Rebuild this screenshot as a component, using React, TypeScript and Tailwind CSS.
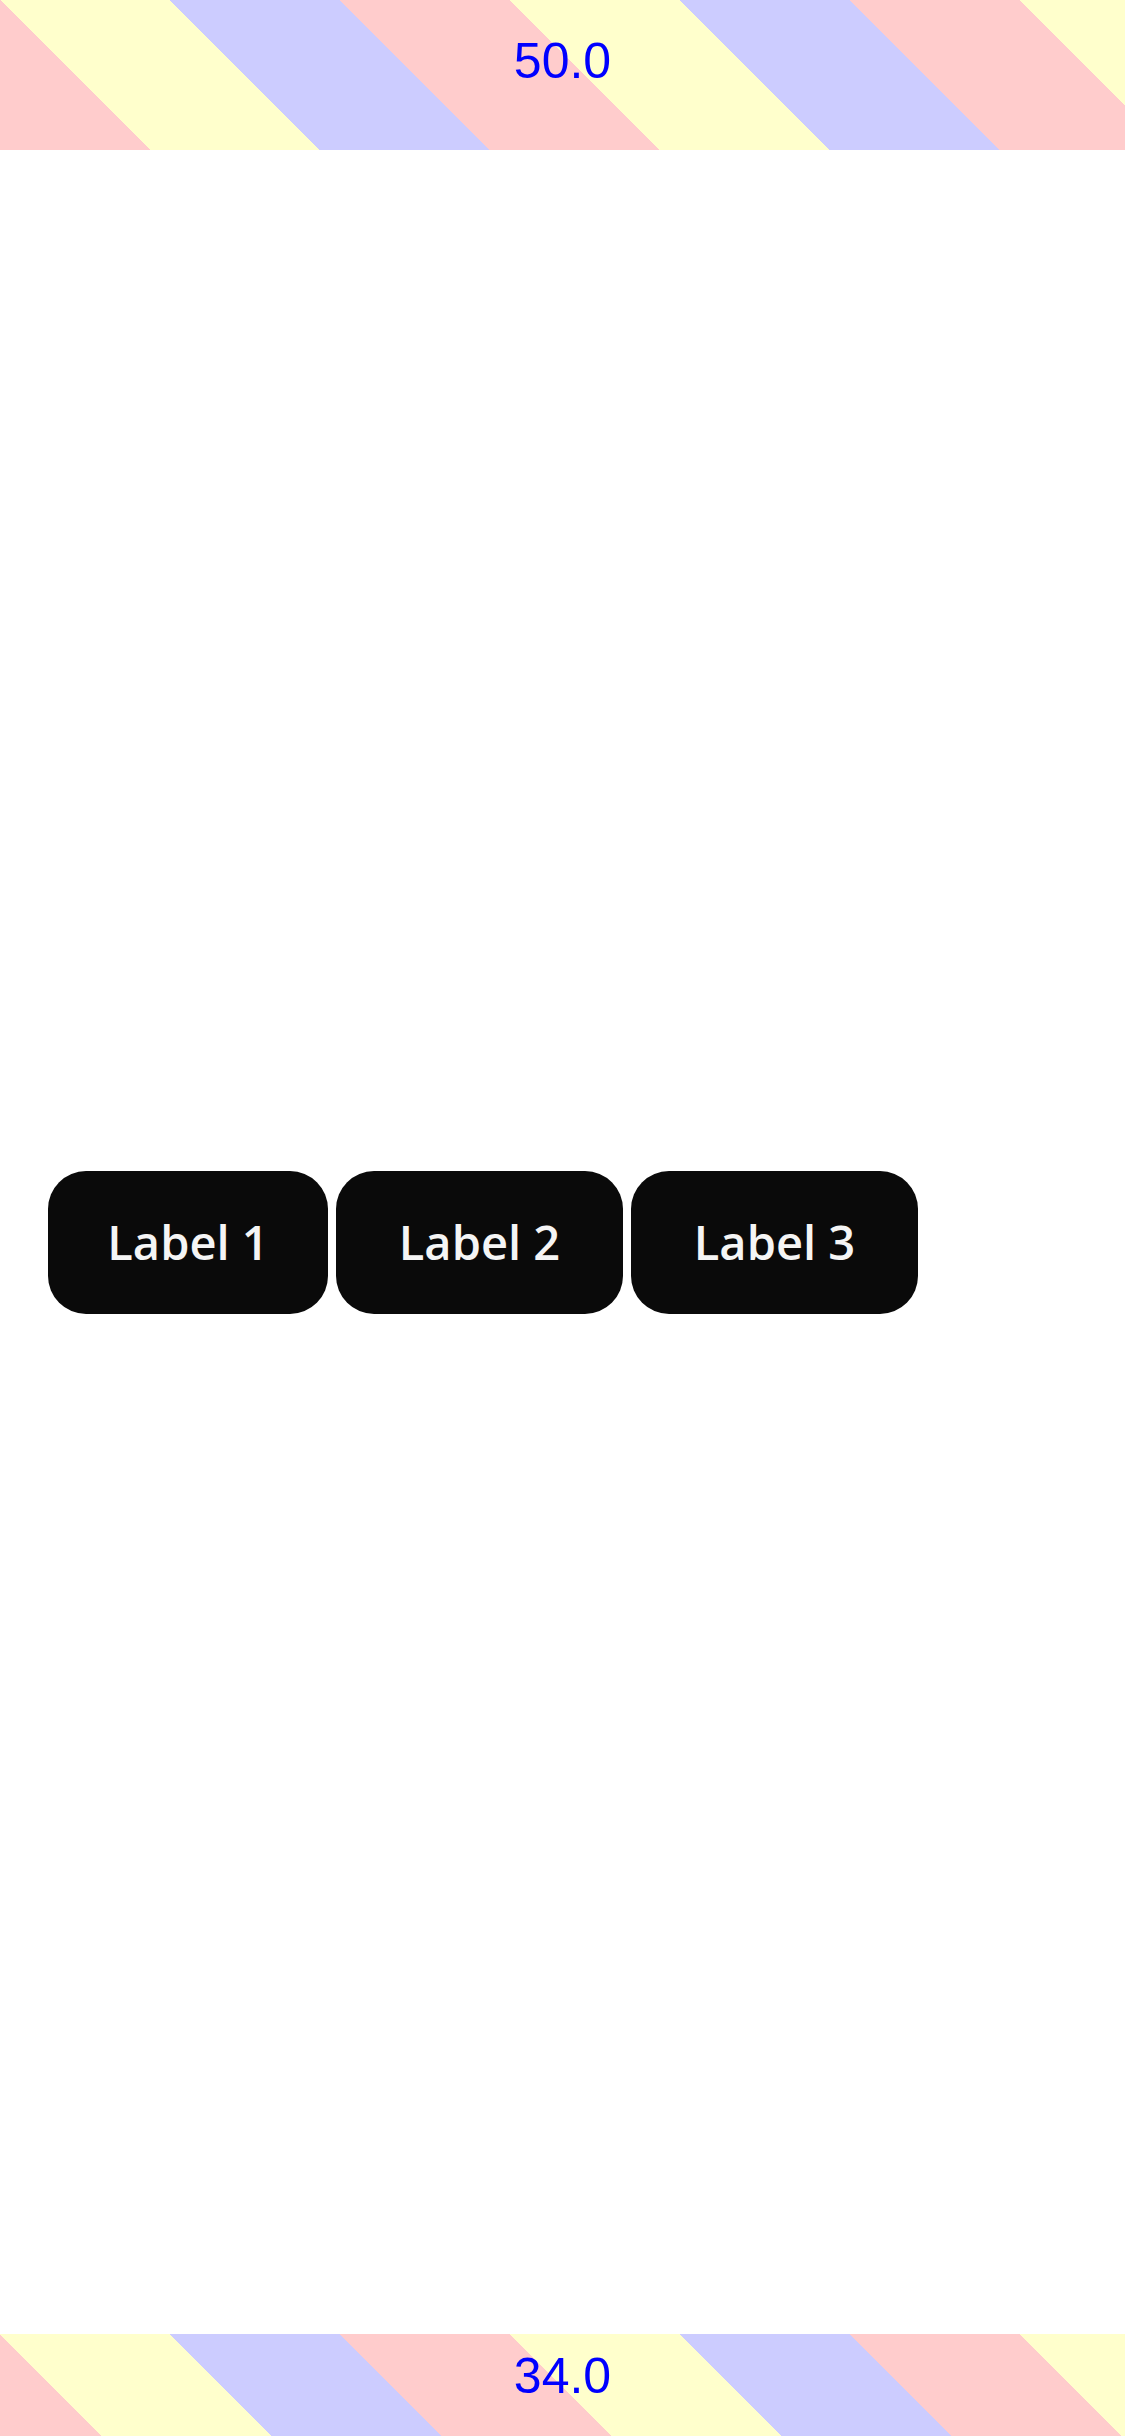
import React from "react";

const buttons = [
  { label: "Label 1", w: "w-[280px]" },
  { label: "Label 2", w: "w-[287px]" },
  { label: "Label 3", w: "w-[287px]" },
];

export default function App() {
  return (
    <div className="flex h-[2436px] w-[1125px] flex-col bg-white">
      <div className="flex h-[150px] shrink-0 justify-center bg-[repeating-linear-gradient(45deg,#ffcccc_-14.1px,#ffcccc_106.07px,#ffffcc_106.07px,#ffffcc_226.27px,#ccccff_226.27px,#ccccff_346.48px)] pt-[36px]">
        <span className="text-[50px] leading-none text-[#0000ff] [font-family:'Liberation_Sans',Arial,sans-serif]">
          50.0
        </span>
      </div>
      <div className="flex flex-1 items-center gap-[8px] pl-[48px]">
        {buttons.map((b) => (
          <div
            key={b.label}
            className={
              "flex h-[143px] shrink-0 items-center justify-center rounded-[38px] bg-[#0a0a0a] text-[47px] font-semibold text-[#f5f5f5] [font-family:'Open_Sans','Noto_Sans',sans-serif] " +
              b.w
            }
          >
            {b.label}
          </div>
        ))}
      </div>
      <div className="flex h-[102px] shrink-0 justify-center bg-[repeating-linear-gradient(45deg,#ffcccc_-48.08px,#ffcccc_72.12px,#ffffcc_72.12px,#ffffcc_192.33px,#ccccff_192.33px,#ccccff_312.53px)] pt-[17px]">
        <span className="text-[50px] leading-none text-[#0000ff] [font-family:'Liberation_Sans',Arial,sans-serif]">
          34.0
        </span>
      </div>
    </div>
  );
}
